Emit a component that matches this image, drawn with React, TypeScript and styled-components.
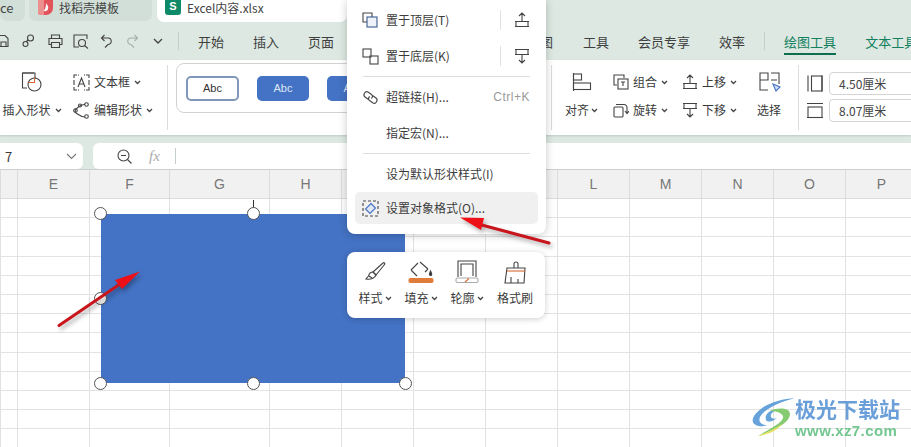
import React from 'react'
import styled, { createGlobalStyle } from 'styled-components'

const GlobalStyle = createGlobalStyle`
    html, body {
        margin: 0;
        padding: 0;
        background: #fff;
    }
    * {
        box-sizing: border-box;
    }
`

const Page = styled.div`
    position: relative;
    width: 911px;
    height: 447px;
    overflow: hidden;
    display: flex;
    flex-direction: column;
    background: #dce8e1;
    color: #3a3a3a;
    font-family: 'Noto Sans CJK SC', 'Noto Sans', sans-serif;
    font-size: 12px;
    line-height: 1;
`

/* tabs */
const TabBar = styled.div`
    height: 22px;
    display: flex;
    gap: 4px;
    flex: none;
`
const Tab = styled.div<{ $w: number; $active?: boolean }>`
    width: ${(p) => p.$w}px;
    height: ${(p) => (p.$active ? 22 : 21)}px;
    margin-left: ${(p) => (p.$active ? 1 : 0)}px;
    border-radius: 0 0 7px 7px;
    background: ${(p) => (p.$active ? '#fff' : '#d2dfd8')};
    display: flex;
    align-items: flex-start;
    gap: 6px;
    padding: 0 8px;
    overflow: hidden;
`
const TabLabel = styled.span`
    margin-top: 1px;
    line-height: 13px;
    color: #444;
    white-space: nowrap;
`
const CutTabLabel = styled(TabLabel)`
    margin-left: -8px;
    font-size: 13px;
`
const SheetBadge = styled.div`
    width: 16px;
    height: 15px;
    flex: none;
    background: #0e8a68;
    border-radius: 0 0 3px 3px;
    color: #fff;
    font-weight: 700;
    font-size: 11px;
    line-height: 12px;
    text-align: center;
    font-family: 'Liberation Sans', sans-serif;
`

/* quick access + ribbon tabs */
const QuickRow = styled.div`
    height: 38px;
    flex: none;
    display: flex;
    align-items: center;
`
const QuickIcons = styled.div`
    width: 178px;
    height: 100%;
    display: flex;
    align-items: center;
    flex: none;
`
const QuickIcon = styled.div<{ $w: number }>`
    width: ${(p) => p.$w}px;
    display: flex;
    justify-content: center;
    flex: none;
`
const VLine = styled.div<{ $h: number }>`
    width: 1px;
    height: ${(p) => p.$h}px;
    background: #c3cfc8;
    flex: none;
`
const RibbonTab = styled.div<{ $left: number; $green?: boolean }>`
    position: relative;
    margin-left: ${(p) => p.$left}px;
    font-size: 13px;
    line-height: 40px;
    height: 38px;
    white-space: nowrap;
    flex: none;
    color: ${(p) => (p.$green ? '#13805f' : '#3f3f3f')};
`
const TabSeparator = styled(VLine)`
    margin: 0 19px;
`
const TabUnderline = styled.div`
    position: absolute;
    left: 0;
    right: 0;
    bottom: 5px;
    height: 2px;
    background: #0f6e50;
`

/* ribbon */
const Ribbon = styled.div`
    height: 75px;
    flex: none;
    background: #fff;
    display: flex;
    box-shadow: 0 1px 2px rgb(0 0 0 / 12%);
`
const RibbonSection = styled.div<{ $w: number }>`
    width: ${(p) => p.$w}px;
    flex: none;
    margin: 5px 0;
    padding-top: 3px;
    height: 65px;
    display: flex;
    border-right: 1px solid #dcdcdc;
`
const LastSection = styled(RibbonSection)`
    border-right: 0;
    padding-left: 8px;
    gap: 6px;
`
const ToolColumn = styled.div<{ $left: number; $w?: number; $center?: boolean }>`
    margin-left: ${(p) => p.$left}px;
    width: ${(p) => (p.$w ? `${p.$w}px` : 'auto')};
    flex: none;
    display: grid;
    grid-template-rows: 28px 28px;
    justify-items: ${(p) => (p.$center ? 'center' : 'start')};
    align-items: center;
`
const Tool = styled.div`
    display: flex;
    align-items: center;
    gap: 4px;
    white-space: nowrap;
`
const TightTool = styled(Tool)`
    gap: 2px;
`
const Gallery = styled.div`
    width: 365px;
    height: 50px;
    margin: 3px 0 0 8px;
    border: 1px solid #d2d2d2;
    border-radius: 8px;
    display: flex;
    align-items: center;
    gap: 18px;
    padding-left: 9px;
    flex: none;
    font-family: 'Liberation Sans', sans-serif;
`
const StyleSwatch = styled.div<{ $filled?: boolean }>`
    width: ${(p) => (p.$filled ? 52 : 53)}px;
    height: 25px;
    border-radius: 5px;
    flex: none;
    display: flex;
    align-items: center;
    justify-content: center;
    font-size: 11px;
    color: ${(p) => (p.$filled ? '#dfe7f6' : '#333')};
    background: ${(p) => (p.$filled ? '#4472c4' : '#fff')};
    border: ${(p) => (p.$filled ? '0' : '2px solid #8097b8')};
`
const SizeColumn = styled.div`
    display: flex;
    flex-direction: column;
    gap: 4px;
    padding-top: 4px;
`
const SizeRow = styled.div`
    display: flex;
    align-items: center;
    gap: 6px;
    height: 23px;
`
const SizeInput = styled.div`
    width: 100px;
    height: 23px;
    border: 1px solid #d4d4d4;
    border-radius: 4px;
    padding-left: 9px;
    line-height: 21px;
    color: #444;
`
const SectionGap = styled.div`
    height: 8px;
    flex: none;
`

/* formula */
const FormulaRow = styled.div`
    height: 26px;
    flex: none;
    display: flex;
    gap: 10px;
`
const NameBox = styled.div`
    width: 83px;
    background: #fff;
    border-radius: 0 6px 6px 0;
    display: flex;
    align-items: center;
    justify-content: space-between;
    padding: 0 6px 0 5px;
    font-size: 13px;
`
const FormulaBox = styled.div`
    flex: 1;
    background: #fff;
    border-radius: 6px 0 0 6px;
    display: flex;
    align-items: center;
    padding-left: 24px;
`
const FxLabel = styled.span`
    margin-left: 17px;
    margin-right: 12px;
    width: 14px;
    color: #aaa;
    font: italic 15px 'Liberation Serif', serif;
`

/* sheet */
const ColumnHeader = styled.div`
    height: 30px;
    flex: none;
    display: flex;
    background: #f1f1f1;
    border-top: 1px solid #cfcfcf;
    border-bottom: 1px solid #dcdcdc;
`
const HeaderCell = styled.div<{ $w: number }>`
    width: ${(p) => p.$w}px;
    flex: none;
    border-left: 1px solid #dcdcdc;
    color: #777;
    font-family: 'Liberation Sans', sans-serif;
    font-size: 14px;
    text-align: center;
    line-height: 29px;
`
const SheetBody = styled.div`
    position: relative;
    flex: 1;
    display: flex;
    background: repeating-linear-gradient(
        to bottom,
        #fff 0,
        #fff 18.2px,
        #e3e3e3 18.2px,
        #e3e3e3 19.2px
    );
`
const GridColumn = styled.div<{ $w: number }>`
    width: ${(p) => p.$w}px;
    flex: none;
    border-left: 1px solid #e1e1e1;
`
const Shape = styled.div`
    position: absolute;
    left: 101px;
    top: 15px;
    width: 304px;
    height: 169px;
    background: #4472c4;
`
const Handle = styled.div<{ $x: number; $y: number }>`
    position: absolute;
    left: ${(p) => p.$x}px;
    top: ${(p) => p.$y}px;
    width: 13px;
    height: 13px;
    margin: -6px 0 0 -6px;
    border-radius: 50%;
    background: #fff;
    border: 1px solid #555;
`
const RotateStem = styled.div`
    position: absolute;
    left: 152px;
    top: -14px;
    width: 1px;
    height: 8px;
    background: #333;
`

/* context menu */
const Menu = styled.div`
    position: absolute;
    left: 347px;
    top: 0;
    width: 199px;
    height: 234px;
    padding-top: 2px;
    background: #fff;
    border-radius: 0 0 8px 8px;
    box-shadow: 0 1px 8px rgb(0 0 0 / 22%);
`
const MenuItem = styled.div<{ $hover?: boolean }>`
    height: ${(p) => (p.$hover ? 32 : 36)}px;
    margin: 0 8px;
    padding: 0 8px 0 7px;
    border-radius: 5px;
    display: flex;
    align-items: center;
    background: ${(p) => (p.$hover ? '#f0f0f0' : 'transparent')};
`
const MenuIcon = styled.div`
    width: 17px;
    height: 17px;
    margin-right: 7px;
    flex: none;
`
const MenuLabel = styled.span`
    flex: 1;
    white-space: nowrap;
    color: #3c3c3c;
`
const Shortcut = styled.span`
    color: #9a9a9a;
    font-family: 'Liberation Sans', sans-serif;
    font-size: 12px;
    letter-spacing: 0.5px;
`
const MenuTrailing = styled.div`
    display: flex;
    align-items: center;
    height: 20px;
    padding-left: 13px;
    border-left: 1px solid #e2e2e2;
`
const MenuLine = styled.div`
    height: 1px;
    margin: 2px 16px;
    background: #dedede;
`

/* mini toolbar */
const MiniBar = styled.div`
    position: absolute;
    left: 347px;
    top: 252px;
    width: 198px;
    height: 66px;
    padding-left: 5px;
    background: #fff;
    border-radius: 8px;
    box-shadow: 0 1px 6px rgb(0 0 0 / 20%);
    display: flex;
`
const MiniItem = styled.div`
    width: 46px;
    display: flex;
    flex-direction: column;
    align-items: center;
    padding-top: 8px;
    gap: 8px;
`
const LastMiniItem = styled(MiniItem)`
    margin-left: 2px;
`
const MiniLabel = styled.div`
    display: flex;
    align-items: center;
    gap: 2px;
    white-space: nowrap;
`

/* annotations */
const Arrows = styled.svg`
    position: absolute;
    left: 0;
    top: 0;
    filter: drop-shadow(2px 3px 2px rgb(0 0 0 / 30%));
`
const Watermark = styled.div`
    position: absolute;
    left: 752px;
    top: 396px;
    display: flex;
    align-items: flex-start;
    opacity: 0.92;
`
const WatermarkText = styled.div`
    display: flex;
    flex-direction: column;
`
const WatermarkTitle = styled.div`
    color: #5f97d6;
    font-size: 21px;
    font-weight: 700;
    line-height: 24px;
    white-space: nowrap;
`
const WatermarkUrl = styled.div`
    margin-top: 3px;
    color: #68c286;
    font-family: 'Liberation Sans', sans-serif;
    font-size: 15px;
    line-height: 15px;
    font-weight: 700;
    letter-spacing: 0.4px;
    white-space: nowrap;
`

const Svg = styled.svg`
    display: block;
    flex: none;
    fill: none;
    stroke: #444;
    stroke-width: 1.1;
`

const Chevron = () => (
    <Svg width="7" height="5" viewBox="0 0 7 5">
        <path d="M1 1l2.5 2.5L6 1" strokeWidth="1.3" />
    </Svg>
)

const Icon = ({ w, h, children }: { w: number; h: number; children: React.ReactNode }) => (
    <Svg width={w} height={h} viewBox={`0 0 ${w} ${h}`}>
        {children}
    </Svg>
)

const MoveUpIcon = () => (
    <Icon w={16} h={16}>
        <path d="M8 9.500V1M5 4l3-3 3 3M1 9.500h14M1 14.500h14M2 9.500v5M14 9.500v5" />
    </Icon>
)

const MoveDownIcon = () => (
    <Icon w={16} h={16}>
        <path d="M1 1.500h14M2 1.500v5M14 1.500v5M1 6.500h14M8 6.500V15M5 12l3 3 3-3" />
    </Icon>
)

const quickIcons: { w: number; el: React.ReactNode }[] = [
    {
        w: 9,
        el: (
            <Icon w={9} h={14}>
                <path d="M-4 1.500h9l3 3v8h-12M1 12V8h5v4" />
            </Icon>
        ),
    },
    {
        w: 38,
        el: (
            <Icon w={13} h={14}>
                <circle cx="8.500" cy="4" r="3" />
                <circle cx="3.500" cy="10" r="2.500" />
                <path d="M6 6l-2 2" />
            </Icon>
        ),
    },
    {
        w: 16,
        el: (
            <Icon w={15} h={14}>
                <path d="M3.500 4.500V1h8v3.500M3.500 10.500H1V4.500h13v6h-2.500M3.500 8.500h8v5h-8z" />
            </Icon>
        ),
    },
    {
        w: 35,
        el: (
            <Icon w={16} h={15}>
                <path d="M14 5V1H1v12h5" />
                <circle cx="9" cy="9" r="3.500" />
                <path d="M11.500 11.500L15 14.500" />
            </Icon>
        ),
    },
    {
        w: 16,
        el: (
            <Icon w={12} h={14}>
                <path d="M4.500 1L1.500 4l3 3M2 4h6a3 3 0 0 1 0 6.500L5 13.500" />
            </Icon>
        ),
    },
    {
        w: 38,
        el: (
            <Svg width="12" height="14" viewBox="0 0 12 14" opacity="0.35">
                <path d="M7.500 1l3 3-3 3M10 4H4a3 3 0 0 0 0 6.500l3 3" />
            </Svg>
        ),
    },
    {
        w: 12,
        el: (
            <Icon w={10} h={6}>
                <path d="M1 1l4 4 4-4" strokeWidth="1.3" />
            </Icon>
        ),
    },
]

// I, J and K sit behind the context menu, so their labels are left out
const columns = [
    { label: '', w: 17 },
    { label: 'E', w: 72 },
    { label: 'F', w: 80 },
    { label: 'G', w: 100 },
    { label: 'H', w: 72 },
    { label: '', w: 72 },
    { label: '', w: 72 },
    { label: '', w: 72 },
    { label: 'L', w: 72 },
    { label: 'M', w: 72 },
    { label: 'N', w: 72 },
    { label: 'O', w: 72 },
    { label: 'P', w: 72 },
]

const handles = [
    [-1, -1],
    [152, -1],
    [-1, 84],
    [-1, 169],
    [152, 169],
    [304, 169],
]

const App = () => (
    <Page>
        <GlobalStyle />
        <TabBar>
            <Tab $w={25}>
                <CutTabLabel>ce</CutTabLabel>
            </Tab>
            <Tab $w={123}>
                <svg width="15" height="15" viewBox="0 0 15 15" style={{ flex: 'none', marginLeft: 1 }}>
                    <path d="M0 0h15v8a7 7 0 0 1-7 7H3a3 3 0 0 1-3-3z" fill="#e2535a" />
                    <path d="M0 0h6v15H3a3 3 0 0 1-3-3z" fill="#ec8f8f" />
                    <path d="M8 3c1 2 3 3 2 6-.5 2-3 3-4.500 1.500C7 10 8 7 8 3z" fill="#fff" />
                </svg>
                <TabLabel>找稻壳模板</TabLabel>
            </Tab>
            <Tab $w={190} $active>
                <SheetBadge>S</SheetBadge>
                <TabLabel>Excel内容.xlsx</TabLabel>
            </Tab>
        </TabBar>

        <QuickRow>
            <QuickIcons>
                {quickIcons.map((q, i) => (
                    <QuickIcon key={i} $w={q.w}>
                        {q.el}
                    </QuickIcon>
                ))}
            </QuickIcons>
            <VLine $h={18} />
            <RibbonTab $left={19}>开始</RibbonTab>
            <RibbonTab $left={29}>插入</RibbonTab>
            <RibbonTab $left={29}>页面</RibbonTab>
            <RibbonTab $left={193}>视图</RibbonTab>
            <RibbonTab $left={30}>工具</RibbonTab>
            <RibbonTab $left={29}>会员专享</RibbonTab>
            <RibbonTab $left={29}>效率</RibbonTab>
            <TabSeparator $h={18} />
            <RibbonTab $left={0} $green>
                绘图工具
                <TabUnderline />
            </RibbonTab>
            <RibbonTab $left={29} $green>
                文本工具
            </RibbonTab>
        </QuickRow>

        <Ribbon>
            <RibbonSection $w={168}>
                <ToolColumn $left={2} $w={60} $center>
                    <Icon w={22} h={20}>
                        <path d="M13 1H1.500v15H6" />
                        <path d="M1.500 1H14v6" />
                        <circle cx="13.500" cy="12.500" r="6.500" />
                        <path d="M7.500 10.500h6V5.500" stroke="#d86a32" />
                    </Icon>
                    <Tool>
                        插入形状
                        <Chevron />
                    </Tool>
                </ToolColumn>
                <ToolColumn $left={11}>
                    <Tool>
                        <Icon w={17} h={17}>
                            <path d="M1 4V1h3M13 1h3v3M1 13v3h3M13 16h3v-3" />
                            <path d="M1 6v5M16 6v5M5 1h1M11 1h1M5 16h1M11 16h1" />
                            <path d="M5 13L8.500 4 12 13M6.200 10h4.600" />
                        </Icon>
                        文本框
                        <Chevron />
                    </Tool>
                    <Tool>
                        <Icon w={17} h={17}>
                            <path d="M12 2.500C7 2 6 5 3 7c-1 1-1 3 0 4 3 2 5 4 9 4" />
                            <circle cx="13.500" cy="2.500" r="1.800" />
                            <circle cx="2.500" cy="8.500" r="1.800" />
                            <circle cx="13.500" cy="14.500" r="1.800" />
                            <circle cx="7" cy="3.500" r="1.500" />
                        </Icon>
                        编辑形状
                        <Chevron />
                    </Tool>
                </ToolColumn>
            </RibbonSection>
            <Gallery>
                <StyleSwatch>Abc</StyleSwatch>
                <StyleSwatch $filled>Abc</StyleSwatch>
                <StyleSwatch $filled>Abc</StyleSwatch>
            </Gallery>
            <RibbonSection $w={11} />
            <RibbonSection $w={247}>
                <ToolColumn $left={13} $w={32} $center>
                    <Icon w={20} h={18}>
                        <path d="M1.500 0v18" />
                        <rect x="1.500" y="1" width="8" height="6" />
                        <rect x="1.500" y="10" width="17" height="6.500" />
                    </Icon>
                    <TightTool>
                        对齐
                        <Chevron />
                    </TightTool>
                </ToolColumn>
                <ToolColumn $left={16}>
                    <Tool>
                        <Icon w={16} h={16}>
                            <path d="M4 11H1V1h10v3" />
                            <rect x="5" y="5" width="10" height="10" />
                            <path d="M8 8h4M10 8v4" />
                        </Icon>
                        组合
                        <Chevron />
                    </Tool>
                    <Tool>
                        <Icon w={16} h={16}>
                            <rect x="1" y="5" width="9" height="10" rx="1" />
                            <path d="M3 2.500h8a3 3 0 0 1 3 3V11M12 9l2 2.500L16 9" />
                        </Icon>
                        旋转
                        <Chevron />
                    </Tool>
                </ToolColumn>
                <ToolColumn $left={14} $w={59}>
                    <Tool>
                        <MoveUpIcon />
                        上移
                        <Chevron />
                    </Tool>
                    <Tool>
                        <MoveDownIcon />
                        下移
                        <Chevron />
                    </Tool>
                </ToolColumn>
                <ToolColumn $left={15} $w={26} $center>
                    <Svg width="23" height="21" viewBox="0 0 23 21">
                        <path d="M2 8V1h8v7H2M2 8v10h8M13 1h8v11M13 8h6" />
                        <path d="M15 12l7 3-4 4z" stroke="#4472c4" fill="#d6e0f3" />
                    </Svg>
                    <Tool>选择</Tool>
                </ToolColumn>
            </RibbonSection>
            <LastSection $w={112}>
                <SizeColumn>
                    <SizeRow>
                        <Icon w={16} h={17}>
                            <path d="M1 .5v16M15 .5v16" />
                            <rect x="4.500" y="1" width="10.500" height="15" />
                        </Icon>
                        <SizeInput>4.50厘米</SizeInput>
                    </SizeRow>
                    <SizeRow>
                        <Icon w={16} h={17}>
                            <path d="M0 1.500h16M0 15.500h16" />
                            <rect x="1" y="5" width="14" height="10.500" />
                        </Icon>
                        <SizeInput>8.07厘米</SizeInput>
                    </SizeRow>
                </SizeColumn>
            </LastSection>
        </Ribbon>
        <SectionGap />

        <FormulaRow>
            <NameBox>
                7
                <Icon w={11} h={7}>
                    <path d="M1 1l4.500 4.500L10 1" stroke="#777" />
                </Icon>
            </NameBox>
            <FormulaBox>
                <Icon w={15} h={15}>
                    <circle cx="6.500" cy="6.500" r="5.500" />
                    <path d="M4 6.500h5M10.500 10.500l4 4" />
                </Icon>
                <FxLabel>fx</FxLabel>
                <VLine $h={16} />
            </FormulaBox>
        </FormulaRow>

        <ColumnHeader>
            {columns.map((c, i) => (
                <HeaderCell key={i} $w={c.w}>
                    {c.label}
                </HeaderCell>
            ))}
        </ColumnHeader>
        <SheetBody>
            {columns.map((c, i) => (
                <GridColumn key={i} $w={c.w} />
            ))}
            <Shape>
                <RotateStem />
                {handles.map(([x, y], i) => (
                    <Handle key={i} $x={x} $y={y} />
                ))}
            </Shape>
        </SheetBody>

        <Menu>
            <MenuItem>
                <MenuIcon>
                    <Icon w={17} h={17}>
                        <path d="M1 1h9v9H1z" />
                        <rect x="5" y="5" width="10" height="10" fill="#eef2f9" stroke="#3c5c8f" />
                    </Icon>
                </MenuIcon>
                <MenuLabel>置于顶层(T)</MenuLabel>
                <MenuTrailing>
                    <MoveUpIcon />
                </MenuTrailing>
            </MenuItem>
            <MenuItem>
                <MenuIcon>
                    <Icon w={17} h={17}>
                        <rect x="1" y="1" width="8" height="8" />
                        <rect x="8" y="8" width="8" height="8" />
                    </Icon>
                </MenuIcon>
                <MenuLabel>置于底层(K)</MenuLabel>
                <MenuTrailing>
                    <MoveDownIcon />
                </MenuTrailing>
            </MenuItem>
            <MenuLine />
            <MenuItem>
                <MenuIcon>
                    <Icon w={17} h={17}>
                        <path d="M6.500 10.500L3 8C.5 6.200 3 1.500 6 3l3.500 2.500c1.500 1.200 1.200 3-.2 4" />
                        <path d="M10.500 6.500L14 9c2.500 1.800 0 6.500-3 5L7.500 11.500c-1.500-1.200-1.200-3 .2-4" />
                    </Icon>
                </MenuIcon>
                <MenuLabel>超链接(H)...</MenuLabel>
                <Shortcut>Ctrl+K</Shortcut>
            </MenuItem>
            <MenuItem>
                <MenuIcon />
                <MenuLabel>指定宏(N)...</MenuLabel>
            </MenuItem>
            <MenuLine />
            <MenuItem>
                <MenuIcon />
                <MenuLabel>设为默认形状样式(I)</MenuLabel>
            </MenuItem>
            <MenuItem $hover>
                <MenuIcon>
                    <Icon w={17} h={17}>
                        <rect x="1" y="1" width="15" height="15" strokeDasharray="3 2" />
                        <path d="M9 3.500l4.500 4.500L8 13.500 3.500 9z" stroke="#4472c4" fill="#dfe6f4" />
                    </Icon>
                </MenuIcon>
                <MenuLabel>设置对象格式(O)...</MenuLabel>
            </MenuItem>
        </Menu>

        <MiniBar>
            <MiniItem>
                <Icon w={24} h={24}>
                    <path d="M10 12L20 3c1-1 2.500.5 1.500 1.500L13 15z" />
                    <path d="M10 12c-3 0-4 2-4.500 4L3 19c5 1 9-1 10-4z" />
                    <path d="M6 16l3 2" />
                </Icon>
                <MiniLabel>
                    样式
                    <Chevron />
                </MiniLabel>
            </MiniItem>
            <MiniItem>
                <Icon w={26} h={24}>
                    <path d="M12 2l8 7M3 10l7-7M3 10l6 6M20 9l-3 3" />
                    <path d="M22.500 11c1 2 2 3.200 1 4.200-1 .8-2.500 0-2-1.500z" fill="#333" />
                    <rect x="1" y="18.500" width="24" height="4" rx="1.500" fill="#e07b39" stroke="#e07b39" />
                </Icon>
                <MiniLabel>
                    填充
                    <Chevron />
                </MiniLabel>
            </MiniItem>
            <MiniItem>
                <Icon w={24} h={24}>
                    <path d="M3 17V1h18v16M6 16V4h12v12" />
                    <rect x="1" y="18" width="22" height="4.500" rx="1.500" stroke="#aaa" />
                    <path d="M10 22l4-3.500" stroke="#d86a32" />
                </Icon>
                <MiniLabel>
                    轮廓
                    <Chevron />
                </MiniLabel>
            </MiniItem>
            <LastMiniItem>
                <Icon w={24} h={24}>
                    <path d="M11 8V4a2 2 0 0 1 4 0v4M4 8h18l-1 15H2z" />
                    <path d="M4 11h18" stroke="#d86a32" />
                    <path d="M8 17v6M15 19v4" />
                </Icon>
                <MiniLabel>格式刷</MiniLabel>
            </LastMiniItem>
        </MiniBar>

        <Arrows width="911" height="447" viewBox="0 0 911 447">
            <path d="M59 325.500L120 284" stroke="#c8161d" strokeWidth="3" strokeLinecap="round" />
            <path d="M140 271.500L115 280l7 9z" fill="#ee1018" />
            <path d="M549 243L478 224" stroke="#c8161d" strokeWidth="3" strokeLinecap="round" />
            <path d="M460 217.500L484 218l-3 12z" fill="#ee1018" />
        </Arrows>

        <Watermark>
            <svg width="43" height="42" viewBox="0 0 43 42" style={{ flex: 'none' }}>
                <path d="M43 2C28 3 10 8 2 20c-3 5-1 9 5 10 3 .5 6 0 8-1-6 0-9-3-7-8C12 13 28 6 43 2z" fill="#5b9bd8" />
                <path d="M14 24c-2-6 5-11 12-10-5 1-8 4-7 7 1 2 4 2 6 1-3 3-9 5-11 2z" fill="#5b9bd8" />
                <path d="M18 15c8-4 20-3 20 3 0 9-17 17-32 22 11-7 23-12 25-18 1-4-5-7-13-7z" fill="#7cc766" />
                <path d="M6 40c9-4 17-7 24-12-4 6-14 11-24 12z" fill="#e4e05a" />
            </svg>
            <WatermarkText>
                <WatermarkTitle>极光下载站</WatermarkTitle>
                <WatermarkUrl>www.xz7.com</WatermarkUrl>
            </WatermarkText>
        </Watermark>
    </Page>
)

export default App
